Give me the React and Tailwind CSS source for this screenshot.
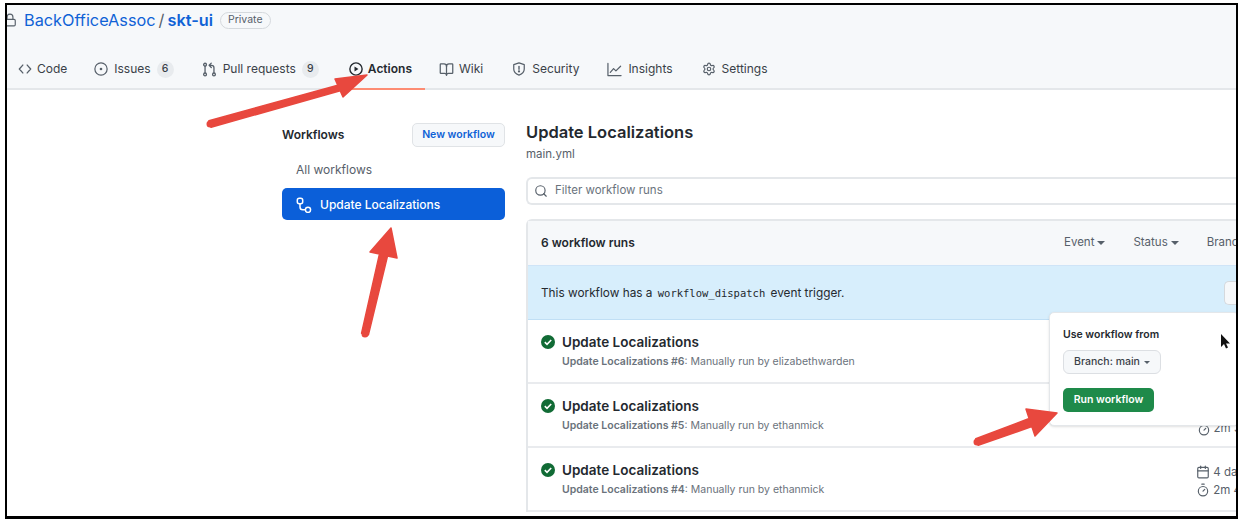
import React from "react";
import { BookOpen, Settings, Search, Lock, Calendar, Timer } from "lucide-react";

const font = { fontFamily: "Inter, 'Liberation Sans', sans-serif" };

const G = "#57606a";

function CodeIcon() {
  return (
    <svg width="14" height="14" viewBox="0 0 16 16" fill="none" stroke={G} strokeWidth="1.5" strokeLinecap="round" strokeLinejoin="round">
      <path d="M5.5 3.5 1.5 8l4 4.5M10.5 3.5l4 4.5-4 4.5" />
    </svg>
  );
}
function IssueIcon() {
  return (
    <svg width="14" height="14" viewBox="0 0 16 16" fill="none" stroke={G} strokeWidth="1.4">
      <circle cx="8" cy="8" r="7" />
      <circle cx="8" cy="8" r="1.5" fill={G} stroke="none" />
    </svg>
  );
}
function PrIcon() {
  return (
    <svg width="15" height="15" viewBox="0 0 16 16" fill="none" stroke={G} strokeWidth="1.4" strokeLinecap="round" strokeLinejoin="round">
      <circle cx="3.25" cy="2.8" r="1.5" />
      <path d="M3.25 4.5v7" />
      <circle cx="3.25" cy="13.2" r="1.5" />
      <circle cx="12.75" cy="13.2" r="1.5" />
      <path d="M12.75 11.5V6a2.5 2.5 0 0 0-2.5-2.5H8M9.9 1.2 7.6 3.5l2.3 2.3" />
    </svg>
  );
}
function ActionsIcon() {
  return (
    <svg width="14" height="14" viewBox="0 0 16 16" fill="none" stroke="#24292f" strokeWidth="1.6">
      <circle cx="8" cy="8" r="7" />
      <path d="M6.3 5.2v5.6L10.8 8z" fill="#24292f" stroke="none" />
    </svg>
  );
}
function ShieldIcon() {
  return (
    <svg width="14" height="14" viewBox="0 0 16 16" fill="none" stroke={G} strokeWidth="1.4" strokeLinecap="round" strokeLinejoin="round">
      <path d="M8 1 2 3v5c0 3.4 2.4 5.8 6 7 3.6-1.2 6-3.6 6-7V3z" />
      <path d="M8 5v3.4" strokeWidth="1.6" />
      <circle cx="8" cy="10.8" r=".6" fill={G} />
    </svg>
  );
}
function GraphIcon() {
  return (
    <svg width="15" height="15" viewBox="0 0 16 16" fill="none" stroke={G} strokeWidth="1.3" strokeLinecap="round" strokeLinejoin="round">
      <path d="M1 1.5V14.5H15" />
      <path d="M3.5 11 7 7l2.5 2.5L14.5 4.5" />
    </svg>
  );
}
function WorkflowIcon() {
  return (
    <svg width="16" height="16" viewBox="0 0 16 16" fill="none" stroke="#fff" strokeWidth="1.5" strokeLinejoin="round">
      <rect x="1.3" y="1.3" width="5.4" height="5.4" rx="2" />
      <path d="M4 6.7V10a2.8 2.8 0 0 0 2.8 2.8H9" />
      <circle cx="12" cy="12.8" r="2.6" />
    </svg>
  );
}

function Tab({ icon, label, count, active, cls }) {
  return (
    <div className={`flex items-center h-full ${cls || ""}`}>
      {icon}
      <span className={`text-[12px] ${active ? "font-semibold text-[#24292f]" : "text-[#3a4148]"}`}>{label}</span>
      {count && <span className="w-[17px] h-[17px] rounded-full bg-[#e8ebee] text-[10.5px] font-medium flex items-center justify-center text-[#3a4148]">{count}</span>}
    </div>
  );
}

function Run({ n, by, children }) {
  return (
    <div className="h-[64px] flex pl-[13px] pt-[13px] gap-[7px] border-b-2 border-[#e9ebee]">
      <svg width="14" height="14" viewBox="0 0 14 14" className="mt-[2px] shrink-0">
        <circle cx="7" cy="7" r="7" fill="#116b35" />
        <path d="M3.8 7.2 6 9.3 10.2 5" stroke="#fff" strokeWidth="1.6" fill="none" />
      </svg>
      <div className="flex-1">
        <div className="text-[13.5px] leading-[18px] font-semibold text-[#24292f]">Update Localizations</div>
        <div className="text-[10.5px] leading-[14px] mt-[4px] text-[#6a727b]"><span className="font-semibold">Update Localizations #{n}</span>: Manually run by {by}</div>
      </div>
      {children}
    </div>
  );
}

function Arrow({ tail, tip, a, b, t = 3.5 }) {
  const dx = tip[0] - tail[0], dy = tip[1] - tail[1];
  const l = Math.hypot(dx, dy);
  const px = -dy / l, py = dx / l;
  const mx = (a[0] + b[0]) / 2, my = (a[1] + b[1]) / 2;
  const sign = a[0] * px + a[1] * py > b[0] * px + b[1] * py ? 1 : -1;
  const pts = [
    tip, a,
    [mx + (a[0] - mx) * 0.3, my + (a[1] - my) * 0.3],
    [tail[0] + px * t * sign, tail[1] + py * t * sign],
    [tail[0] - px * t * sign, tail[1] - py * t * sign],
    [mx + (b[0] - mx) * 0.3, my + (b[1] - my) * 0.3],
    b,
  ];
  return (
    <g>
      <polygon points={pts.map((q) => q.join(",")).join(" ")} fill="#e8483e" stroke="#e8483e" strokeWidth="1.5" strokeLinejoin="round" />
      <circle cx={tail[0]} cy={tail[1]} r={t} fill="#e8483e" />
    </g>
  );
}

export default function App() {
  return (
    <div className="w-[1242px] h-[522px] bg-white overflow-hidden pt-[3px] pl-[5px] pr-[4px] pb-[3px]" style={font}>
      <div className="relative w-full h-full border-l-[2px] border-t-[2px] border-r-[2px] border-b-[3px] border-black overflow-hidden bg-white flex flex-col">
        <div className="bg-[#f6f8fa] h-[85px] border-b-2 border-[#e4e7ea] flex flex-col shrink-0">
          <div className="h-[30px] flex items-center">
            <Lock size={14} className="ml-[-4px] text-[#57606a]" />
            <span className="ml-[7px] text-[16.3px] text-[#0f62d6]">BackOfficeAssoc</span>
            <span className="mx-[3px] text-[16.3px] text-[#57606a]">/</span>
            <span className="text-[16.3px] font-semibold text-[#0f62d6]">skt-ui</span>
            <span className="ml-[7px] h-[17px] px-[7px] flex items-center border border-[#d5d9dd] rounded-full text-[10.5px] text-[#57606a]">Private</span>
          </div>
          <div className="relative flex-1 flex items-center pl-[11px] pt-[15px]">
            <Tab cls="gap-[5px]" icon={<CodeIcon />} label="Code" />
            <Tab cls="ml-[27px] gap-[6px]" icon={<IssueIcon />} label="Issues" count="6" />
            <Tab cls="ml-[28px] gap-[6px]" icon={<PrIcon />} label="Pull requests" count="9" />
            <Tab cls="ml-[30px] gap-[5px]" icon={<ActionsIcon />} label="Actions" active />
            <Tab cls="ml-[27px] gap-[5px]" icon={<BookOpen size={15} className="text-[#57606a]" />} label="Wiki" />
            <Tab cls="ml-[29px] gap-[6px]" icon={<ShieldIcon />} label="Security" />
            <Tab cls="ml-[28px] gap-[6px]" icon={<GraphIcon />} label="Insights" />
            <Tab cls="ml-[29px] gap-[6px]" icon={<Settings size={14} className="text-[#57606a]" />} label="Settings" />
            <div className="absolute left-[330px] bottom-[-2px] w-[88px] h-[2px] bg-[#fd8c73]" />
          </div>
        </div>

        <div className="flex-1 flex pt-[33px] pl-[275px] min-h-0">
          <div className="w-[223px] shrink-0">
            <div className="flex items-center justify-between h-[24px]">
              <span className="text-[12px] font-semibold text-[#24292f]">Workflows</span>
              <span className="h-[24px] w-[93px] rounded-[5px] border border-[#e0e3e6] bg-[#f6f8fa] text-[10.5px] font-semibold text-[#0f62d6] flex items-center justify-center">New workflow</span>
            </div>
            <div className="text-[12px] text-[#57606a] pl-[14px] mt-[14px] h-[18px] leading-[18px]">All workflows</div>
            <div className="h-[32px] mt-[9px] pt-[1px] rounded-[5px] bg-[#0b5fd9] text-white flex items-center pl-[14px] gap-[8px]">
              <WorkflowIcon />
              <span className="text-[12px] font-medium">Update Localizations</span>
            </div>
          </div>
          <div className="ml-[21px] flex-1 min-w-0">
            <div className="text-[16.5px] leading-[20px] font-semibold text-[#24292f] mt-[-3px] pt-[2px]">Update Localizations</div>
            <div className="text-[11.5px] leading-[14px] mt-[5px] text-[#57606a]">main.yml</div>
            <div className="mt-[16px] h-[28px] border-y-2 border-l-2 border-[#e4e7ea] rounded-l-[6px] flex items-center pl-[6px] gap-[7px] text-[11.5px] text-[#6a737d] mr-[-10px]">
              <Search size={14} className="text-[#57606a]" />
              <span>Filter workflow runs</span>
            </div>
            <div className="relative mt-[14px] border-l-2 border-t-2 border-[#e4e7ea] rounded-tl-[6px]">
              <div className="h-[45px] bg-[#f6f8fa] flex items-center pl-[13px] text-[12px] border-b border-[#cfe4f7] relative">
                <span className="font-semibold text-[#24292f]">6 workflow runs</span>
                <div className="ml-auto flex items-center text-[11.5px] text-[#57606a] w-[172px] gap-[28px] whitespace-nowrap overflow-hidden">
                  <span className="flex items-center gap-[3px]">Event<i className="border-x-[4px] border-t-[4px] border-x-transparent border-t-[#57606a]" /></span>
                  <span className="flex items-center gap-[3px]">Status<i className="border-x-[4px] border-t-[4px] border-x-transparent border-t-[#57606a]" /></span>
                  <span>Branch</span>
                </div>
              </div>
              <div className="h-[54px] bg-[#d7eefc] flex items-center pl-[13px] pt-[2px] text-[11.8px] text-[#24292f] border-b border-[#c0dff5] relative">
                This workflow has a&nbsp;
                <code className="text-[10.5px] px-[2px]" style={{ fontFamily: "'DejaVu Sans Mono', monospace" }}>workflow_dispatch</code>
                &nbsp;event trigger.
                <span className="absolute right-0 top-[15px] w-[12px] h-[24px] border-y border-l border-[#d5d9dd] rounded-l-[5px] bg-[#f6f8fa]" />
              </div>
              <Run n="6" by="elizabethwarden" />
              <Run n="5" by="ethanmick">
                <div className="text-[11.5px] text-[#57606a] mt-[15px] mr-[-5px] flex items-center gap-[3px] whitespace-nowrap"><Timer size={14} /><span>2m 3</span></div>
              </Run>
              <Run n="4" by="ethanmick">
                <div className="text-[11.5px] text-[#57606a] mt-[2px] leading-[18px] mr-[-5px] whitespace-nowrap">
                  <div className="flex items-center gap-[3px]"><Calendar size={14} /><span>4 da</span></div>
                  <div className="flex items-center gap-[3px]"><Timer size={14} /><span>2m 4</span></div>
                </div>
              </Run>
              <div className="absolute left-[521px] top-[91px] w-[190px] h-[114px] bg-white border border-[#e4e7ea] rounded-[5px] shadow-sm pl-[13px] pt-[15px]">
                <div className="text-[10.5px] font-semibold text-[#24292f] leading-[14px]">Use workflow from</div>
                <div className="mt-[8px] w-[98px] h-[24px] rounded-[6px] border border-[#dcdfe3] bg-[#f6f8fa] text-[10.5px] font-medium text-[#3a4148] flex items-center justify-center gap-[4px]">Branch: main<i className="border-x-[3.5px] border-t-[3.5px] border-x-transparent border-t-[#57606a]" /></div>
                <div className="mt-[14px] w-[91px] h-[24px] rounded-[5px] bg-[#1e8a4a] text-white text-[10.5px] font-semibold flex items-center justify-center">Run workflow</div>
              </div>
            </div>
          </div>
        </div>

        <svg width="1242" height="522" className="absolute left-[-7px] top-[-5px] pointer-events-none">
          <Arrow tail={[210, 124]} tip={[367, 75]} a={[335, 79]} b={[343, 97]} />
          <Arrow tail={[365, 334]} tip={[391, 228]} a={[370, 252]} b={[397, 258]} />
          <Arrow tail={[977, 442]} tip={[1057, 413]} a={[1026, 409]} b={[1035, 436]} />
          <path d="M1221 334v13l3-3 2 4.5 2-1-2-4h4z" fill="#111" />
        </svg>
      </div>
    </div>
  );
}
